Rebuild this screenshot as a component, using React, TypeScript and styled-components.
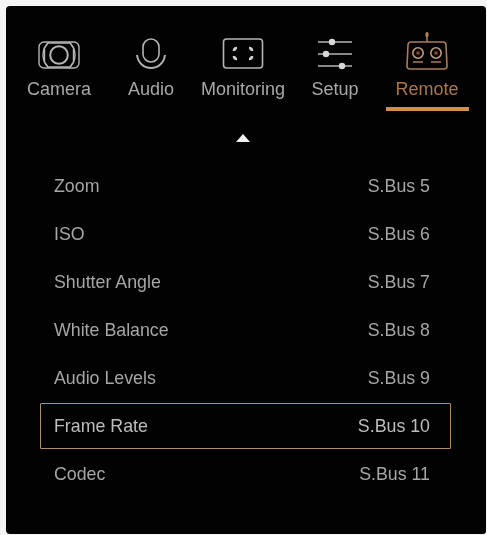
import React from "react";
import styled, { createGlobalStyle } from "styled-components";

const Global = createGlobalStyle`
  html, body { margin: 0; padding: 0; background: #fff; }
  body { width: 487px; height: 535px; overflow: hidden; font-family: "Liberation Sans", Arial, sans-serif; }
`;

const Page = styled.div`
  width: 487px;
  height: 535px;
  padding: 6px 1px 1px 6px;
  box-sizing: border-box;
  background: #f4f4f4;
`;

const Panel = styled.main`
  height: 100%;
  background: #020202;
  border-radius: 4px 4px 3px 4px;
  padding-top: 26px;
  padding-left: 7px;
  box-sizing: border-box;
  filter: blur(0.6px);
`;

const Tabs = styled.nav`
  display: grid;
  grid-template-columns: repeat(5, 92px);
  width: 460px;
`;

const Tab = styled.div<{ $active?: boolean }>`
  display: flex;
  flex-direction: column;
  align-items: center;
  color: ${(p) => (p.$active ? "#a87850" : "#a8a8a8")};
`;

const IconBox = styled.div`
  height: 38px;
  display: flex;
  align-items: flex-end;
  justify-content: center;
`;

const TabLabel = styled.span`
  font-size: 18px;
  line-height: 20px;
  margin-top: 9px;
  white-space: nowrap;
`;

const Underline = styled.div<{ $active?: boolean }>`
  width: 83px;
  height: 4px;
  margin-top: 8px;
  background: ${(p) => (p.$active ? "#d08f4c" : "transparent")};
`;

const Caret = styled.div`
  width: 0;
  height: 0;
  margin: 23px 0 0 223px;
  border-left: 7px solid transparent;
  border-right: 7px solid transparent;
  border-bottom: 8px solid #f2f2f2;
`;

const List = styled.ul`
  list-style: none;
  margin: 20px 0 0 26px;
  padding: 0;
  width: 413px;
`;

const Row = styled.li<{ $selected?: boolean }>`
  height: 48px;
  box-sizing: border-box;
  display: flex;
  align-items: center;
  justify-content: space-between;
  padding: 0 22px 0 15px;
  font-size: 17.8px;
  color: ${(p) => (p.$selected ? "#bdbdbd" : "#a6a6a6")};
  ${(p) => (p.$selected ? `outline: 1.5px solid #b58c62; outline-offset: -2px; border-radius: 2px;` : "")}
`;

const stroke = { fill: "none", stroke: "#b4b4b4", strokeWidth: 1.6 };

const CameraIcon = () => (
  <svg width="42" height="30" viewBox="0 0 42 30">
    <path d="M6 2h30a5 5 0 0 1 5 5v16a5 5 0 0 1-5 5H6a5 5 0 0 1-5-5V7a5 5 0 0 1 5-5z" {...stroke} strokeWidth={1.4} />
    <path d="M11 2C3 9 3 21 11 28M31 2c8 7 8 19 0 26" fill="none" stroke="#b4b4b4" strokeWidth={1.4} />
    <path d="M10 3h22l3.500 5v14L32 27H10l-3.500-5V8z" fill="#020202" stroke="#b4b4b4" strokeWidth={1.4} />
    <circle cx="21" cy="15" r="8.800" {...stroke} strokeWidth={2} />
  </svg>
);

const AudioIcon = () => (
  <svg width="30" height="32" viewBox="0 0 30 32">
    <rect x="7" y="1" width="16" height="23" rx="8" {...stroke} />
    <path d="M1 17c1 8 7 13 14 13s13-5 14-13" {...stroke} strokeWidth={2} />
  </svg>
);

const MonitoringIcon = () => (
  <svg width="42" height="32" viewBox="0 0 42 32">
    <rect x="1.500" y="1" width="39" height="29" rx="3" {...stroke} />
    <path d="M12 13c0-2 1-3 3-3M30 13c0-2-1-3-3-3M12 18c0 2 1 3 3 3M30 18c0 2-1 3-3 3" fill="none" stroke="#d0d0d0" strokeWidth={2.6} />
  </svg>
);

const SetupIcon = () => (
  <svg width="36" height="32" viewBox="0 0 36 32">
    <path d="M1 4h34M1 16h34M1 28h34" {...stroke} />
    <circle cx="15" cy="4" r="3.200" fill="#d8d8d8" />
    <circle cx="9" cy="16" r="3.200" fill="#d8d8d8" />
    <circle cx="25" cy="28" r="3.200" fill="#d8d8d8" />
  </svg>
);

const RemoteIcon = () => {
  const s = { fill: "none", stroke: "#a87c58", strokeWidth: 1.6 };
  return (
    <svg width="42" height="38" viewBox="0 0 42 38">
      <rect x="19.500" y="0" width="3" height="5" rx="1.500" fill="#b98458" />
      <path d="M21 4v6" {...s} />
      <path d="M5 10h32a3 3 0 0 1 3 3l1 21a3 3 0 0 1-3 3H4a3 3 0 0 1-3-3l1-21a3 3 0 0 1 3-3z" {...s} />
      <circle cx="12" cy="21" r="5.200" {...s} stroke="#c09a78" />
      <circle cx="30" cy="21" r="5.200" {...s} stroke="#c09a78" />
      <circle cx="12" cy="21" r="1.800" fill="#8a4a34" />
      <circle cx="30" cy="21" r="1.800" fill="#8a4a34" />
      <path d="M7 30h10M25 30h10" {...s} />
    </svg>
  );
};

const tabs = [
  { label: "Camera", icon: <CameraIcon /> },
  { label: "Audio", icon: <AudioIcon /> },
  { label: "Monitoring", icon: <MonitoringIcon /> },
  { label: "Setup", icon: <SetupIcon /> },
  { label: "Remote", icon: <RemoteIcon />, active: true },
];

const rows = [
  ["Zoom", "S.Bus 5"],
  ["ISO", "S.Bus 6"],
  ["Shutter Angle", "S.Bus 7"],
  ["White Balance", "S.Bus 8"],
  ["Audio Levels", "S.Bus 9"],
  ["Frame Rate", "S.Bus 10"],
  ["Codec", "S.Bus 11"],
];

export default function App() {
  return (
    <>
      <Global />
      <Page>
        <Panel>
          <Tabs>
            {tabs.map((t) => (
              <Tab key={t.label} $active={t.active}>
                <IconBox>{t.icon}</IconBox>
                <TabLabel>{t.label}</TabLabel>
                <Underline $active={t.active} />
              </Tab>
            ))}
          </Tabs>
          <Caret />
          <List>
            {rows.map(([name, value]) => (
              <Row key={name} $selected={name === "Frame Rate"}>
                <span>{name}</span>
                <span>{value}</span>
              </Row>
            ))}
          </List>
        </Panel>
      </Page>
    </>
  );
}
